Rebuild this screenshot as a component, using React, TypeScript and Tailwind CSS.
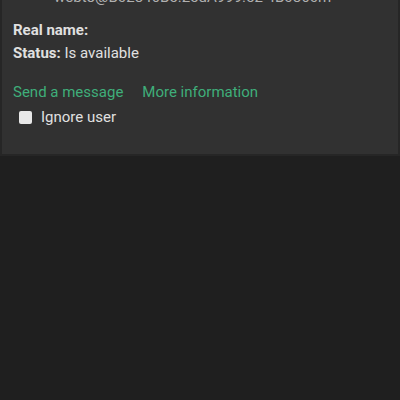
export default function App() {
  return (
    <div className="w-[400px] h-[400px] overflow-hidden bg-[#1f1f1f] font-['Roboto',sans-serif]">
      <div className="h-[156px] bg-[#313131] border-x-2 border-b-2 border-[#262626] overflow-hidden">
        <div className="pl-[52px] -mt-[12px] text-[15px] leading-[18px] text-[#b0b0b0] whitespace-nowrap">
          webto@B02846B5.25dA999.52 4B0860m
        </div>
        <div className="pl-[11px] pt-[13px] text-[15px] text-[#e0e0e0]">
          <div className="leading-[23px]"><span className="font-bold">Real name:</span></div>
          <div className="leading-[23px]"><span className="font-bold">Status:</span> Is available</div>
          <div className="flex gap-[19px] mt-[16px] text-[#3fae7a] leading-[22px]">
            <span>Send a message</span>
            <span>More information</span>
          </div>
          <label className="flex items-center gap-[9px] pl-[6px] mt-[3px] leading-[22px]">
            <span className="w-[13px] h-[13px] bg-[#e8e8e8] rounded-[2px] inline-block" />
            <span>Ignore user</span>
          </label>
        </div>
      </div>
    </div>
  );
}
